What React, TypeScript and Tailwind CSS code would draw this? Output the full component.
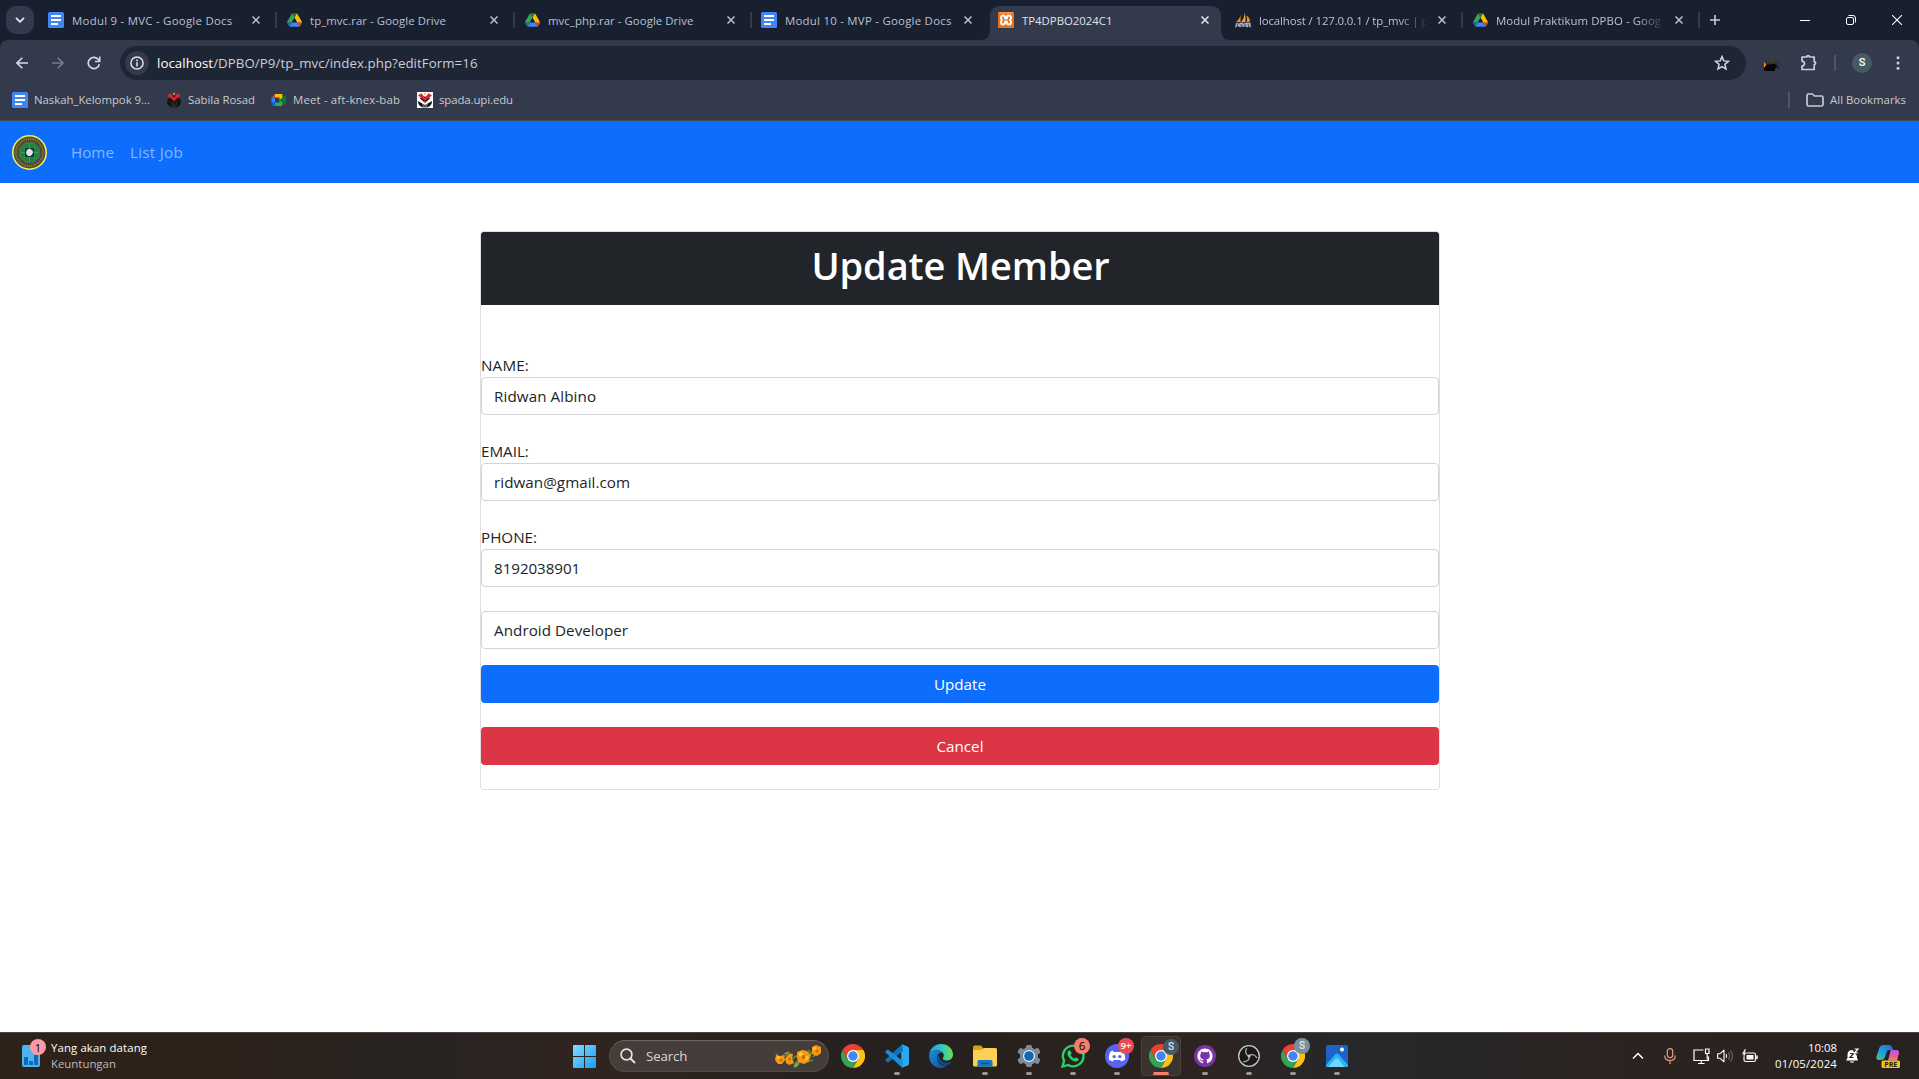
import React from "react";

type IconProps = { className?: string };

/* ---------- favicons ---------- */
const Docs = ({ className = "" }: IconProps) => (
  <svg viewBox="0 0 16 16" className={`size-4 shrink-0 ${className}`}>
    <rect width="16" height="16" rx="1.5" fill="#4285f4" />
    <path d="M3 3h10v2H3zM3 7h10v2H3zM3 11h7v2H3z" fill="#fff" />
  </svg>
);

const Drive = () => (
  <svg viewBox="0 0 87.3 78" className="mx-[0.5px] h-[14px] w-[15px] shrink-0">
    <path d="M6.6 66.85l3.85 6.65c.8 1.4 1.95 2.5 3.3 3.3L27.500 53H0c0 1.550.4 3.100 1.200 4.500z" fill="#1967d2" />
    <path d="M43.650 25L29.900 1.200c-1.350.8-2.500 1.900-3.300 3.300L1.200 48.500A9.060 9.060 0 0 0 0 53h27.500z" fill="#34a853" />
    <path d="M73.550 76.800c1.350-.8 2.500-1.900 3.300-3.300l1.600-2.750L86.100 57.500c.8-1.400 1.200-2.950 1.200-4.500H59.800l5.850 11.500z" fill="#ea4335" />
    <path d="M43.650 25L57.400 1.200C56.050.4 54.500 0 52.900 0H34.400c-1.600 0-3.150.45-4.500 1.200z" fill="#188038" />
    <path d="M59.800 53H27.500L13.750 76.800c1.350.8 2.900 1.200 4.500 1.200h50.800c1.600 0 3.150-.45 4.500-1.200z" fill="#4285f4" />
    <path d="M73.400 26.500l-12.700-22c-.8-1.400-1.950-2.500-3.300-3.300L43.650 25 59.800 53h27.450c0-1.550-.4-3.100-1.200-4.500z" fill="#fbbc04" />
  </svg>
);

const Xampp = () => (
  <svg viewBox="0 0 16 16" className="size-4 shrink-0">
    <rect width="16" height="16" rx="1" fill="#ee7019" />
    <path d="M1.500 1h13" stroke="#f9c9a4" strokeWidth="0.8" />
    <path d="M5 3.600C2.600 3.600 2.400 6.600 4 8c-1.600 1.400-1.400 4.400 1 4.400 1.800 0 2.200-1.400 2.200-2.900h1.600c0 1.500.4 2.900 2.200 2.900 2.400 0 2.600-3 1-4.400 1.600-1.400 1.400-4.400-1-4.400-1.800 0-2.200 1.400-2.200 2.900H7.200C7.200 5 6.800 3.600 5 3.600z" fill="none" stroke="#fff" strokeWidth="2" strokeLinejoin="round" />
  </svg>
);

const PhpMyAdmin = () => (
  <svg viewBox="0 0 16 16" className="size-4 shrink-0">
    <path d="M5.500 2.500Q5 7 .8 10.200L5.500 10z" fill="#f29111" />
    <path d="M9.500.3Q9.800 6 5.800 10.500l4.600-.4Q11 5 9.500.3z" fill="#f7a23a" />
    <path d="M11.500 3.500q3.700 2.500 3.500 6l-3.300.8q.7-3.500-.2-6.800z" fill="#f29111" />
    <path d="M0 15.500l1-4.500 3 .5 1.500-1 3 1 3-1 4 .3.500 4.700-2-1-1.500 1-2-1.200-1.500 1-2-1-2 1-2-1z" fill="#a9aac9" />
    <path d="M2.500 12v3M5.500 12.500l1 1.500 1-1.500M10.500 12l-1.300 3M13 12l1 3" stroke="#34375c" strokeWidth=".8" fill="none" />
  </svg>
);

const Upi = ({ boxed = false }: { boxed?: boolean }) => (
  <svg viewBox="0 0 16 16" className="size-4 shrink-0">
    {boxed && <rect width="16" height="16" fill="#fff" />}
    <ellipse cx="8" cy="10" rx="7" ry="5.600" fill="#141414" />
    {boxed && <path d="M0 3.500L8 11l8-7.500v5l-8 4.500-8-4.500z" fill="#fff" />}
    <path d="M1 3.500L4.500 1.200 8 6l3.500-4.800L15 3.500 11 6.500 8 9 5 6.500z" fill="#e5202b" />
    <path d="M8 9v6.500M5 10l2 5.500M11 10l-2 5.500" stroke={boxed ? "#ddd" : "#444"} strokeWidth=".6" />
    <circle cx="8" cy="1.800" r="1" fill="#f2b21b" />
  </svg>
);

const Meet = () => (
  <svg viewBox="0 0 16 14" className="h-[14px] w-4 shrink-0">
    <path d="M.5 4.500L4 1v3.500z" fill="#ea4335" />
    <path d="M4 1h6.500q1 0 1 1v4l-3 1V4.500H4z" fill="#fbbc04" />
    <path d="M.5 4.500H4v5H.5z" fill="#2684fc" />
    <path d="M.5 9.500H4V13H1.500q-1 0-1-1z" fill="#0066da" />
    <path d="M4 9.500h4.500V7l3 1.500V12q0 1-1 1H4z" fill="#34a853" />
    <path d="M8.500 7L14 2.500q.9-.5.900.5v8q0 1-.9.500z" fill="#00832d" />
  </svg>
);

/* ---------- browser chrome ---------- */
const Cross = ({ className = "" }: IconProps) => (
  <svg viewBox="0 0 8 8" className={`size-2 shrink-0 ${className}`}>
    <path d="M.5.5l7 7M7.500.5l-7 7" stroke="currentColor" strokeWidth="1.500" />
  </svg>
);

type TabProps = {
  icon: React.ReactNode;
  title: string;
  w: string;
  track: string;
  sep?: boolean;
  active?: boolean;
  fade?: boolean;
  textW?: string;
};

const Tab = ({ icon, title, w, track, sep = true, active, fade, textW = "w-[167px]" }: TabProps) => (
  <div className={`relative flex h-full shrink-0 items-center ${w}`}>
    {active && (
      <div className="absolute inset-y-0 left-0 right-[6px] rounded-t-[9px] bg-[#333a4b]">
        <svg viewBox="0 0 10 10" className="absolute -left-[10px] bottom-0 size-[10px]"><path d="M10 0v10H0Q10 10 10 0z" fill="#333a4b" /></svg>
        <svg viewBox="0 0 10 10" className="absolute -right-[10px] bottom-0 size-[10px]"><path d="M0 0v10h10Q0 10 0 0z" fill="#333a4b" /></svg>
      </div>
    )}
    <div className="relative flex h-[34px] w-full items-center pb-[6px] pl-2">
      {icon}
      <div className={`ml-2 whitespace-nowrap pt-px text-[11.4px] leading-5 ${textW} ${active ? "text-[#dfe3ea]" : "text-[#b9c1d3]"} ${track} ${fade ? "[mask-image:linear-gradient(to_right,black_140px,transparent_170px)]" : ""}`}>
        {title}
      </div>
      <Cross className={`ml-[12px] ${active ? "text-[#e6e9ef]" : "text-[#b9c1d3]"}`} />
      {sep && <div className="ml-auto mr-px h-4 w-[2px] bg-[#333a4b]" />}
    </div>
  </div>
);

const TabStrip = () => (
  <div className="flex h-[40px] bg-[#181f2f] pt-[6px]">
    <div className="ml-[6px] mr-[6px] flex size-[28px] shrink-0 items-center justify-center rounded-[10px] bg-[#333a4b]">
      <svg viewBox="0 0 10 6" className="h-[6px] w-[10px]"><path d="M1 .8l4 4 4-4" fill="none" stroke="#e3e6ee" strokeWidth="1.800" /></svg>
    </div>
    <Tab w="w-[238px]" icon={<Docs />} title="Modul 9 - MVC - Google Docs" track="tracking-[0.27px]" textW="w-[168px]" />
    <Tab w="w-[238px]" icon={<Drive />} title="tp_mvc.rar - Google Drive" track="tracking-[0.07px]" textW="w-[168px]" />
    <Tab w="w-[237px]" icon={<Drive />} title="mvc_php.rar - Google Drive" track="tracking-[0.05px]" />
    <Tab w="w-[237px]" icon={<Docs />} title="Modul 10 - MVP - Google Docs" track="tracking-[0.26px]" sep={false} />
    <Tab w="w-[237px]" icon={<Xampp />} title="TP4DPBO2024C1" track="tracking-[-0.02px]" sep={false} active />
    <Tab w="w-[237px]" icon={<PhpMyAdmin />} title="localhost / 127.0.0.1 / tp_mvc | p" track="tracking-[-0.11px]" fade />
    <Tab w="w-[237px]" icon={<Drive />} title="Modul Praktikum DPBO - Goog" track="tracking-[0.07px]" fade />
    <div className="flex h-[28px] flex-1 items-center justify-between pl-[9px] pr-[17px] text-white">
      <svg viewBox="0 0 10 10" className="size-[10px]"><path d="M5 0v10M0 5h10" stroke="#c7cddb" strokeWidth="1.600" /></svg>
      <div className="flex items-center gap-9">
        <div className="h-px w-[10px] bg-white" />
        <svg viewBox="0 0 10 10" className="size-[10px]">
          <rect x=".5" y="2.500" width="7" height="7" rx="1.500" fill="none" stroke="currentColor" />
          <path d="M2.500.5H7q2.500 0 2.500 2.500v4.500" fill="none" stroke="currentColor" />
        </svg>
        <svg viewBox="0 0 10 10" className="size-[10px]"><path d="M0 0l10 10M10 0L0 10" stroke="currentColor" strokeWidth="1.100" /></svg>
      </div>
    </div>
  </div>
);

const Toolbar = () => (
  <div className="flex h-[40px] items-center rounded-t-[8px] bg-[#333a4b] pt-[6px]">
    <svg viewBox="0 0 12 12" className="ml-4 size-3 shrink-0"><path d="M12 6H1M6.300.7L1 6l5.300 5.300" fill="none" stroke="#d5dae6" strokeWidth="1.600" /></svg>
    <svg viewBox="0 0 12 12" className="ml-6 size-3 shrink-0"><path d="M0 6h11M5.700.7L11 6l-5.300 5.300" fill="none" stroke="#767c8b" strokeWidth="1.600" /></svg>
    <svg viewBox="0 0 14 14" className="ml-[23px] size-[14px] shrink-0">
      <path d="M12.300 8.200A5.600 5.600 0 1 1 11 3.200l1.300 1.500" fill="none" stroke="#d5dae6" strokeWidth="1.700" />
      <path d="M12.700.6v4.900H8" fill="none" stroke="#d5dae6" strokeWidth="1.600" />
    </svg>
    <div className="ml-[19px] flex h-[34px] w-[1626px] shrink-0 items-center rounded-full bg-[#1e2636] pl-[5px] pr-4">
      <div className="flex size-6 items-center justify-center rounded-full bg-[#333a4b]">
        <svg viewBox="0 0 14 14" className="size-[14px]">
          <circle cx="7" cy="7" r="6.100" fill="none" stroke="#dfe3ea" strokeWidth="1.500" />
          <path d="M7 6.200v4.200M7 3.600v1.600" stroke="#dfe3ea" strokeWidth="1.600" />
        </svg>
      </div>
      <div className="ml-2 flex-1 whitespace-nowrap pt-[2px] text-[13.3px] tracking-[0.05px] text-[#c9ced8]"><span className="text-white">localhost</span>/DPBO/P9/tp_mvc/index.php?editForm=16</div>
      <svg viewBox="0 0 16 16" className="size-4"><path d="M8 1.600l1.800 4.300 4.700.4-3.600 3 1.100 4.600L8 11.500l-4 2.400 1.100-4.600-3.600-3 4.700-.4z" fill="none" stroke="#d3d7e0" strokeWidth="1.500" /></svg>
    </div>
    <svg viewBox="0 0 16 16" className="ml-[18px] size-4 shrink-0">
      <path d="M2 6Q4 3 8 4l5-3-1 3q4-1 4 1l-3 2 2 2-4 1H1z" fill="#34302e" />
      <path d="M0 7l2.500 3L0 13z" fill="#ff8a1c" />
      <path d="M2.500 9.500L11 9l1.500 1 2.500 3-.8.5-2.200-2-1.500 4.500H0v-2.500z" fill="#050505" />
      <path d="M5 4q4 2 8-2M4 6q6 1 11-1" stroke="#605a57" strokeWidth=".5" fill="none" />
    </svg>
    <svg viewBox="0 0 18 18" className="ml-5 size-[18px] shrink-0"><path d="M2 3h4.800a1.300 1.300 0 0 1 2.600 0h4.800v4.700a1.300 1.300 0 0 1 0 2.800V15.500H2v-3.400a2.500 2.500 0 0 0 0-5z" fill="none" stroke="#c7cfe2" strokeWidth="1.700" strokeLinejoin="round" /></svg>
    <div className="ml-4 h-4 w-[2px] shrink-0 bg-[#4d5567]" />
    <div className="ml-4 flex size-5 shrink-0 items-center justify-center rounded-full bg-[#455a64] font-['Roboto'] text-[11px] font-medium text-white">S</div>
    <svg viewBox="0 0 4 16" className="ml-[24px] h-4 w-1 shrink-0" fill="#c7cfe2"><circle cx="2" cy="2.800" r="1.500" /><circle cx="2" cy="8" r="1.500" /><circle cx="2" cy="13.200" r="1.500" /></svg>
  </div>
);

const Bookmarks = () => (
  <div className="flex h-[41px] items-center border-b border-[#484b54] bg-[#333a4b] pl-3 pr-[13px] text-[11.4px] text-[#c7cad1]">
    <Docs />
    <span className="ml-[6px] w-[132px] tracking-[-0.03px]">Naskah_Kelompok 9...</span>
    <Upi />
    <span className="ml-[6px] w-[83px] tracking-[-0.02px]">Sabila Rosad</span>
    <Meet />
    <span className="ml-[6px] w-[124px] tracking-[0.17px]">Meet - aft-knex-bab</span>
    <Upi boxed />
    <span className="ml-[6px] tracking-[-0.09px]">spada.upi.edu</span>
    <div className="ml-auto h-4 w-[2px] bg-[#4d5567]" />
    <svg viewBox="0 0 18 14" className="ml-[16px] h-[14px] w-[18px]"><path d="M1 2.500Q1 1 2.500 1H6.500l2 2h7Q17 3 17 4.500v7q0 1.500-1.500 1.500h-13Q1 13 1 11.500z" fill="none" stroke="#c7cad1" strokeWidth="1.700" /></svg>
    <span className="ml-[6px]">All Bookmarks</span>
  </div>
);

/* ---------- web page ---------- */
const Emblem = () => (
  <svg viewBox="0 0 35 35" className="size-[35px]">
    <circle cx="17.500" cy="17.500" r="16.700" fill="#4d4a35" stroke="#f5ef5c" strokeWidth="1.600" />
    <circle cx="17.500" cy="17.500" r="13.600" fill="none" stroke="#8d8425" strokeWidth="2" strokeDasharray="1.200 1.100" />
    <path d="M13.500 8h8l5.500 5.500v8L21.500 27h-8L8 21.500v-8z" fill="#128a3e" stroke="#6a7a63" strokeWidth="1" />
    <path d="M17.500 9v17M9 17.500h17M12 12l11 11M23 12L12 23" stroke="#5f9a6e" strokeWidth=".7" />
    <rect x="13" y="13" width="9" height="9" fill="#2a2f3a" />
    <path d="M17.500 13.500l1.500 1 1.500 1 .5 2-1 2-1.500 1.500h-2l-1.500-1-1-2 .5-2 1-1.500z" fill="#e3e3ea" />
  </svg>
);

const Field = ({ label, value, track, labelTrack = "" }: { label: string; value: string; track: string; labelTrack?: string }) => (
  <div className="mb-6">
    <label className={`block h-6 pl-[0.5px] leading-6 ${labelTrack}`}>{label}</label>
    <div className={`flex h-[38px] items-center rounded-[4px] border border-[#ced4da] pl-[12.6px] pr-3 ${track}`}>{value}</div>
  </div>
);

const Page = () => (
  <div className="flex h-[911px] flex-col bg-white">
    <nav className="flex h-[62px] items-center bg-[#0d6efd] pl-3 text-[15.2px] text-[#86b7fe]">
      <Emblem />
      <span className="ml-6 w-[59px]">Home</span>
      <span className="tracking-[0.27px]">List Job</span>
    </nav>
    <form className="mx-auto mt-[48px] h-[559px] w-[960px] rounded-[4px] border border-[#dfdfdf] text-[15.2px] text-[#212529]">
      <h1 className="mb-12 h-[73px] rounded-t-[3px] bg-[#212529] pl-[2px] pt-[9px] text-center text-[38px] font-semibold leading-[48px] tracking-[-0.1px] text-white">Update Member</h1>
      <Field label="NAME:" value="Ridwan Albino" labelTrack="tracking-[0.17px]" track="tracking-[0.08px]" />
      <Field label="EMAIL:" value="ridwan@gmail.com" track="tracking-[0.04px]" />
      <Field label="PHONE:" value="8192038901" track="tracking-[-0.08px]" />
      <div className="flex h-[38px] items-center rounded-[4px] border border-[#ced4da] pl-[12.6px] pr-3 tracking-[0.04px]">Android Developer</div>
      <button type="button" className="mt-4 block h-[38px] w-full rounded-[4px] bg-[#0d6efd] pl-px text-white">Update</button>
      <button type="button" className="mt-6 block h-[38px] w-full rounded-[4px] bg-[#dc3545] pl-px text-white">Cancel</button>
    </form>
  </div>
);

/* ---------- taskbar ---------- */
const Chrome = () => (
  <svg viewBox="0 0 48 48" className="size-6">
    <path d="M44.800 12A24 24 0 0 1 24 48L34 30 24 12z" fill="#fbc116" />
    <path d="M3.200 12A24 24 0 0 0 24 48L34.400 30H13.600z" fill="#34a353" />
    <path d="M24 12h20.800A24 24 0 0 0 3.200 12L13.600 30 24 24z" fill="#e94235" />
    <circle cx="24" cy="24" r="12" fill="#fff" />
    <circle cx="24" cy="24" r="9.500" fill="#4285f4" />
  </svg>
);

const VsCode = () => (
  <svg viewBox="0 0 24 24" className="size-6">
    <path d="M17.200.3L23 2.800q1 .5 1 1.500v15.400q0 1-1 1.500l-5.800 2.500-1-2V2.500z" fill="#2aa9f0" />
    <path d="M17.200.3L.6 15.600q-.6.6 0 1.200l1.500 1.500q.5.400 1.200 0L18 7z" fill="#0b76c0" />
    <path d="M17.200 23.700L.6 8.400Q0 7.800.6 7.200l1.500-1.500q.5-.4 1.200 0L18 17z" fill="#1a8ddb" />
  </svg>
);

const Edge = () => (
  <svg viewBox="0 0 24 24" className="size-6">
    <defs>
      <linearGradient id="edgeTop" x1="0" x2="1"><stop offset="0" stopColor="#1f9fe0" /><stop offset=".5" stopColor="#2fc3c8" /><stop offset="1" stopColor="#6be04e" /></linearGradient>
      <linearGradient id="edgeBase" x1="0" y1="0" x2="1" y2="1"><stop offset="0" stopColor="#1b8fdc" /><stop offset="1" stopColor="#0b4f9e" /></linearGradient>
    </defs>
    <path d="M.2 10.500C1 4.500 6 0 12 0c7 0 12 5 12 10.500 0 3.500-2.500 6-6.200 6-2.800 0-4-1-4-2 0-.8 1-1.200 1-3.200 0-2.300-2.800-5-7-5S1.200 8.500.2 10.500z" fill="url(#edgeTop)" />
    <path d="M.2 10.500C1.500 8 4.200 6.300 7.800 6.300c2.500 0 4.500 1 5.700 2.400-3-.8-5.500 2.300-5.500 5.800 0 4.500 4 8 9.500 6.500C16 23 14 24 12 24 5 24-.6 18 .2 10.500z" fill="url(#edgeBase)" />
    <path d="M9.500 10.500c-1.200 1-1.700 2.500-1.500 4 .5 4 4.700 6.800 9.500 6.500 2 0 3.700-1.200 4.800-2.700.3-.5-.2-.8-.6-.6-5 2.400-10.500.8-12.200-7.200z" fill="#114a8b" />
  </svg>
);

const Folder = () => (
  <svg viewBox="0 0 24 22" className="h-[22px] w-6">
    <path d="M0 2.500Q0 .5 1.500.5H8l2.500 3V7H0z" fill="#e0a010" />
    <path d="M0 5h8.500L11 3h11.500Q24 3 24 4.500v15.500q0 1.500-1.500 1.500h-21Q0 21.500 0 20z" fill="#fbd155" />
    <path d="M4.500 21.500v-5q0-1.500 1.500-1.500h12q1.500 0 1.500 1.500v5z" fill="#1277c9" />
    <path d="M8 18.500h8" stroke="#0a4f96" strokeWidth="1.200" />
  </svg>
);

const Gear = () => (
  <svg viewBox="0 0 24 24" className="size-6">
    <g fill="#7d8b99">
      <circle cx="12" cy="12" r="9" />
      <rect x="9" y="1" width="6" height="22" rx="1.800" />
      <rect x="9" y="0" width="6" height="24" rx="1.800" transform="rotate(60 12 12)" />
      <rect x="9" y="0" width="6" height="24" rx="1.800" transform="rotate(120 12 12)" />
    </g>
    <circle cx="12" cy="12" r="6" fill="#e9eef3" />
    <circle cx="12" cy="12" r="4.800" fill="#0c67b5" />
  </svg>
);

const WhatsApp = () => (
  <svg viewBox="0 0 24 24" className="size-6">
    <path d="M1.500 22.500l1.600-5.700A10.300 10.300 0 1 1 7.200 21z" fill="none" stroke="#25d366" strokeWidth="2.300" />
    <path d="M8.300 6.300c-.7 0-1.900 1-1.900 2.700 0 4 4.800 8.600 8.400 8.600 1.700 0 3-1.200 3-2.500 0-.6-2.500-1.700-2.900-1.700-.6 0-1 1.200-1.500 1.200-.9 0-3.800-2.600-3.800-3.500 0-.5 1-1 1-1.600 0-.4-1-3.200-2.300-3.200z" fill="#25d366" />
  </svg>
);

const Discord = () => (
  <svg viewBox="0 0 24 24" className="size-6">
    <circle cx="12" cy="12" r="12" fill="#5865f2" />
    <path d="M8 6.800c-1.600.3-2.600.9-2.600.9C4.200 10 3.700 12.500 3.800 15.500c1.300 1.300 3 1.700 4.200 1.800l.9-1.300h6.200l.9 1.300c1.200-.1 2.900-.5 4.200-1.800.1-3-.4-5.500-1.600-7.800 0 0-1-.6-2.600-.9l-.7 1.200H8.700z" fill="#fff" />
    <circle cx="9.200" cy="12.600" r="1.700" fill="#5865f2" />
    <circle cx="14.800" cy="12.600" r="1.700" fill="#5865f2" />
  </svg>
);

const GitHub = () => (
  <svg viewBox="0 0 22 22" className="size-[22px]">
    <circle cx="11" cy="11" r="11" fill="#7d33a8" />
    <g transform="translate(3.400 3.400) scale(.95)">
      <path fill="#fff" d="M8 0C3.580 0 0 3.580 0 8c0 3.540 2.290 6.530 5.470 7.590.4.070.55-.17.55-.38 0-.19-.01-.82-.01-1.490-2.010.37-2.530-.49-2.690-.94-.09-.23-.48-.94-.82-1.130-.28-.15-.68-.52-.01-.53.63-.01 1.080.58 1.230.82.72 1.210 1.870.87 2.330.66.070-.52.28-.87.51-1.070-1.780-.2-3.640-.89-3.640-3.950 0-.87.31-1.590.82-2.150-.08-.2-.36-1.020.08-2.120 0 0 .67-.21 2.200.82a7.420 7.420 0 0 1 4 0c1.530-1.040 2.200-.82 2.200-.82.44 1.100.16 1.920.08 2.120.51.56.82 1.270.82 2.150 0 3.070-1.870 3.750-3.650 3.950.29.25.54.73.54 1.480 0 1.070-.01 1.930-.01 2.200 0 .21.15.46.55.38A8.010 8.010 0 0 0 16 8c0-4.420-3.580-8-8-8z" />
    </g>
  </svg>
);

const Obs = () => (
  <svg viewBox="0 0 22 22" className="size-[22px]">
    <circle cx="11" cy="11" r="10.300" fill="#19191b" stroke="#c9c9c9" strokeWidth="1.300" />
    <g fill="none" stroke="#b4b4b6" strokeWidth="1.200" strokeLinecap="round">
      <path d="M11 11Q6 9 8.500 3.500" />
      <path d="M11 11Q6 9 8.500 3.500" transform="rotate(120 11 11)" />
      <path d="M11 11Q6 9 8.500 3.500" transform="rotate(240 11 11)" />
    </g>
    <circle cx="11" cy="11" r="1.500" fill="#c4c4c6" />
  </svg>
);

const Photos = () => (
  <svg viewBox="0 0 22 22" className="size-[22px]">
    <rect width="22" height="22" rx="2" fill="#1b63c6" />
    <path d="M0 20L9.500 9.300q1.500-1.600 3 0L22 20v.5q0 1.500-1.500 1.500h-19Q0 22 0 20.500z" fill="#2fb2f2" />
    <path d="M2 22L9.500 14q1.500-1.500 3 0l6 8z" fill="#6cd6fb" />
    <circle cx="16" cy="4.500" r="2" fill="#fff" />
  </svg>
);

type AppProps = { children: React.ReactNode; badge?: React.ReactNode; run?: boolean; active?: boolean };

const TaskApp = ({ children, badge, run = true, active }: AppProps) => (
  <div className={`relative mx-[2px] flex size-10 shrink-0 items-center justify-center rounded-[4px] ${active ? "border border-[#48413e] bg-[#3a3330]" : ""}`}>
    {children}
    {badge}
    {run && <div className={`absolute h-[3px] rounded-full ${active ? "bottom-0 w-4 bg-[#f77f67]" : "bottom-[1px] w-[6px] bg-[#9b9694]"}`} />}
  </div>
);

const badgeBase = "absolute left-[21px] top-[2px] flex size-4 items-center justify-center rounded-full leading-none";

const Flowers = () => (
  <svg viewBox="0 0 46 24" className="h-6 w-[46px]">
    <path d="M1 10q3 5 7 3l6-4 3 3M16 15l8-4 4 2M19 23q2-8 8-6M32 17q2-8 10-12M33 6l4 4M29 19l9-3" fill="none" stroke="#5f8a3a" strokeWidth="1.600" />
    <path d="M19 24q0-6 6-6l-2 4zM36 14q4-3 5-8l1 5zM8 10l6-3-2 3z" fill="#7fa655" />
    <g fill="#f39a12">
      <path d="M1 11l4 1 4-1 1 5-3 4H3l-3-4z" /><path d="M10 15q3-6 8-5l-1 4 2 5-5 2-3-2z" /><path d="M22 8l5-2 5 1 4 4-2 6-5 3-6-2-1-5z" /><path d="M37 3l4-2 5 2v6l-4 3-5-2z" />
    </g>
    <g fill="#ffc52e"><circle cx="26" cy="10.500" r="2.200" /><circle cx="31.500" cy="14" r="2" /><circle cx="3.500" cy="13.500" r="1.600" /><circle cx="39.500" cy="4.500" r="1.700" /></g>
    <g fill="#d3620c"><circle cx="28.500" cy="13" r="2" /><circle cx="6" cy="16" r="1.400" /><circle cx="42" cy="7" r="1.500" /><circle cx="14.500" cy="15" r="1.500" /></g>
  </svg>
);

const Taskbar = () => (
  <div className="flex h-[47px] items-center border-t border-[#4b4643] bg-[linear-gradient(to_right,#2e2219_0,#2c2119_220px,#272322_420px,#30241f_590px,#26211e_830px,#26211e_960px,#2d2320_1180px,#26282a_1370px,#2b2320_1620px,#27221f_1919px)] text-white">
    <div className="flex w-[573px] shrink-0 items-center pl-[22px]">
      <div className="relative">
        <svg viewBox="0 0 18 22" className="h-[22px] w-[18px]">
          <rect width="18" height="22" rx="2" fill="#4db4f0" />
          <path d="M2 12h4v8H2zM7 16h4v4H7zM12 10h4v10h-4z" fill="#0f69b8" />
        </svg>
        <div className="absolute -top-[6px] left-2 flex size-4 items-center justify-center rounded-full bg-[#ff9aa5] text-[11px] leading-none text-black">1</div>
      </div>
      <div className="ml-[11px] text-[11.4px] leading-4">
        <div className="tracking-[0.11px]">Yang akan datang</div>
        <div className="text-[#bfbab7]">Keuntungan</div>
      </div>
    </div>
    <svg viewBox="0 0 23 23" className="size-[23px] shrink-0">
      <defs><linearGradient id="winTile" gradientUnits="userSpaceOnUse" x1="0" y1="0" x2="23" y2="23"><stop offset="0" stopColor="#7fdcff" /><stop offset="1" stopColor="#1a9cf5" /></linearGradient></defs>
      <path d="M0 1q0-1 1-1h10v11H0zM12 0h10q1 0 1 1v10H12zM0 12h11v11H1q-1 0-1-1zM12 12h11v10q0 1-1 1H12z" fill="url(#winTile)" />
    </svg>
    <div className="ml-[13px] mr-[2px] flex h-8 w-[220px] shrink-0 items-center rounded-full border border-[#534c49] border-t-[#6b6461] bg-[#443d3a] pl-[10px] pr-[7px]">
      <svg viewBox="0 0 16 16" className="size-4"><circle cx="6.500" cy="6.500" r="5.400" fill="none" stroke="#e6e4e3" strokeWidth="1.700" /><path d="M10.500 10.500L15 15" stroke="#e6e4e3" strokeWidth="1.900" /></svg>
      <span className="ml-[10px] flex-1 pt-px text-[13.300px] tracking-[-0.12px] text-[#dad7d5]">Search</span>
      <Flowers />
    </div>
    <TaskApp run={false}><Chrome /></TaskApp>
    <TaskApp><VsCode /></TaskApp>
    <TaskApp run={false}><Edge /></TaskApp>
    <TaskApp><Folder /></TaskApp>
    <TaskApp><Gear /></TaskApp>
    <TaskApp badge={<div className={`${badgeBase} bg-[#f77f67] text-[11.4px] text-black`}>6</div>}><WhatsApp /></TaskApp>
    <TaskApp badge={<div className={`${badgeBase} bg-[#ea4b50] text-[9.500px] font-semibold text-white`}>9+</div>}><Discord /></TaskApp>
    <TaskApp active badge={<div className={`${badgeBase} bg-[#455a64] font-['Roboto'] text-[10px] font-medium text-[#dfe5e8]`}>S</div>}><Chrome /></TaskApp>
    <TaskApp><GitHub /></TaskApp>
    <TaskApp><Obs /></TaskApp>
    <TaskApp badge={<div className={`${badgeBase} bg-[#78909c] font-['Roboto'] text-[10px] font-medium text-[#e4eaed]`}>S</div>}><Chrome /></TaskApp>
    <TaskApp><Photos /></TaskApp>
    <div className="ml-auto flex items-center pr-[19px]">
      <svg viewBox="0 0 12 8" className="h-2 w-3"><path d="M1 6.500l5-5 5 5" fill="none" stroke="#fff" strokeWidth="1.500" /></svg>
      <svg viewBox="0 0 12 16" className="ml-5 h-4 w-3"><rect x="3.300" y=".6" width="5.400" height="9" rx="2.700" fill="none" stroke="#e79a83" strokeWidth="1.200" /><path d="M.7 7.500q0 5 5.300 5t5.300-5M6 12.500V16" fill="none" stroke="#e79a83" strokeWidth="1.200" /></svg>
      <svg viewBox="0 0 17 17" className="ml-[17px] size-[17px]">
        <path d="M10.500 2H1v10.500h14.500V8.500M5 15.500h6.500M8.300 12.500v3" fill="none" stroke="#fff" strokeWidth="1.200" />
        <path d="M12.500 1h3.500v4.500h-3.500zM14.200 5.500v6" fill="none" stroke="#fff" strokeWidth="1.200" />
      </svg>
      <svg viewBox="0 0 17 14" className="ml-[7px] h-[14px] w-[17px]">
        <path d="M.6 4.700h2.500L7 1.200v11.600L3.100 9.300H.6z" fill="none" stroke="#fff" strokeWidth="1.100" strokeLinejoin="round" />
        <path d="M9 5q1.200 2 0 4" fill="none" stroke="#fff" strokeWidth="1.100" />
        <path d="M11.200 3.300q2.500 3.700 0 7.400M13.500 1.500q4 5.500 0 11" fill="none" stroke="#6b6563" strokeWidth="1.100" />
      </svg>
      <svg viewBox="0 0 17 15" className="ml-[7px] h-[15px] w-[17px]">
        <rect x="3" y="4" width="11.500" height="8.500" rx="1.800" fill="none" stroke="#fff" strokeWidth="1.200" />
        <rect x="5.500" y="6" width="7" height="4.500" fill="#fff" /><path d="M16 6.500v3.500" stroke="#fff" strokeWidth="1.500" />
        <path d="M3.500 0L.8 5.500h2L1.500 9 6 3.800H4L5.200 0z" fill="#fff" stroke="#2b2320" strokeWidth=".5" />
      </svg>
      <div className="ml-[15px] w-[64px] text-right text-[11.4px] leading-4">
        <div>10:08</div>
        <div className="tracking-[0.15px]">01/05/2024</div>
      </div>
      <svg viewBox="0 0 15 16" className="ml-[7px] size-4">
        <path d="M8 2q-5 0-5 5v3L1.500 12.500h12L12.500 10V8zM5 13.500q2.500 2.500 5 0z" fill="#fff" />
        <path d="M5.500 5.500H9L5.500 9.500H9" fill="none" stroke="#2b2320" strokeWidth="1.200" />
        <path d="M10 1h3.500L10 5h3.500" fill="none" stroke="#fff" strokeWidth="1.200" />
      </svg>
      <svg viewBox="0 0 24 23" className="ml-[16px] h-[23px] w-6">
        <defs>
          <linearGradient id="copA" x1="0" y1="1" x2="1" y2="0"><stop offset="0" stopColor="#5ac45a" /><stop offset=".4" stopColor="#1aa5d8" /><stop offset="1" stopColor="#2b62e0" /></linearGradient>
          <linearGradient id="copB" x1="0" y1="0" x2="0" y2="1"><stop offset="0" stopColor="#b45af0" /><stop offset=".6" stopColor="#e85aa0" /><stop offset="1" stopColor="#f58a50" /></linearGradient>
        </defs>
        <path d="M7 0h6q3 0 4 5h-4q-2 0-3 4l-1.500 4Q8 15 5 15H2.500Q0 15 .5 11.500L3.500 2.500Q4.500 0 7 0z" fill="url(#copA)" />
        <path d="M15 5h5.500q3 0 2.500 3.500L21 15.500h-9L14 8q.4-3 1-3z" fill="url(#copB)" />
        <rect x="5.500" y="15.500" width="18.500" height="7.500" rx="1.500" fill="#fbbc1a" />
        <text x="14.800" y="21.800" textAnchor="middle" fontSize="7" fontWeight="700" fill="#1c1a10" fontFamily="Open Sans, sans-serif">PRE</text>
      </svg>
    </div>
  </div>
);

export default function App() {
  return (
    <div className="flex h-[1079px] w-[1919px] flex-col overflow-hidden bg-[#181f2f] font-['Open_Sans',sans-serif]">
      <TabStrip />
      <Toolbar />
      <Bookmarks />
      <Page />
      <Taskbar />
    </div>
  );
}
